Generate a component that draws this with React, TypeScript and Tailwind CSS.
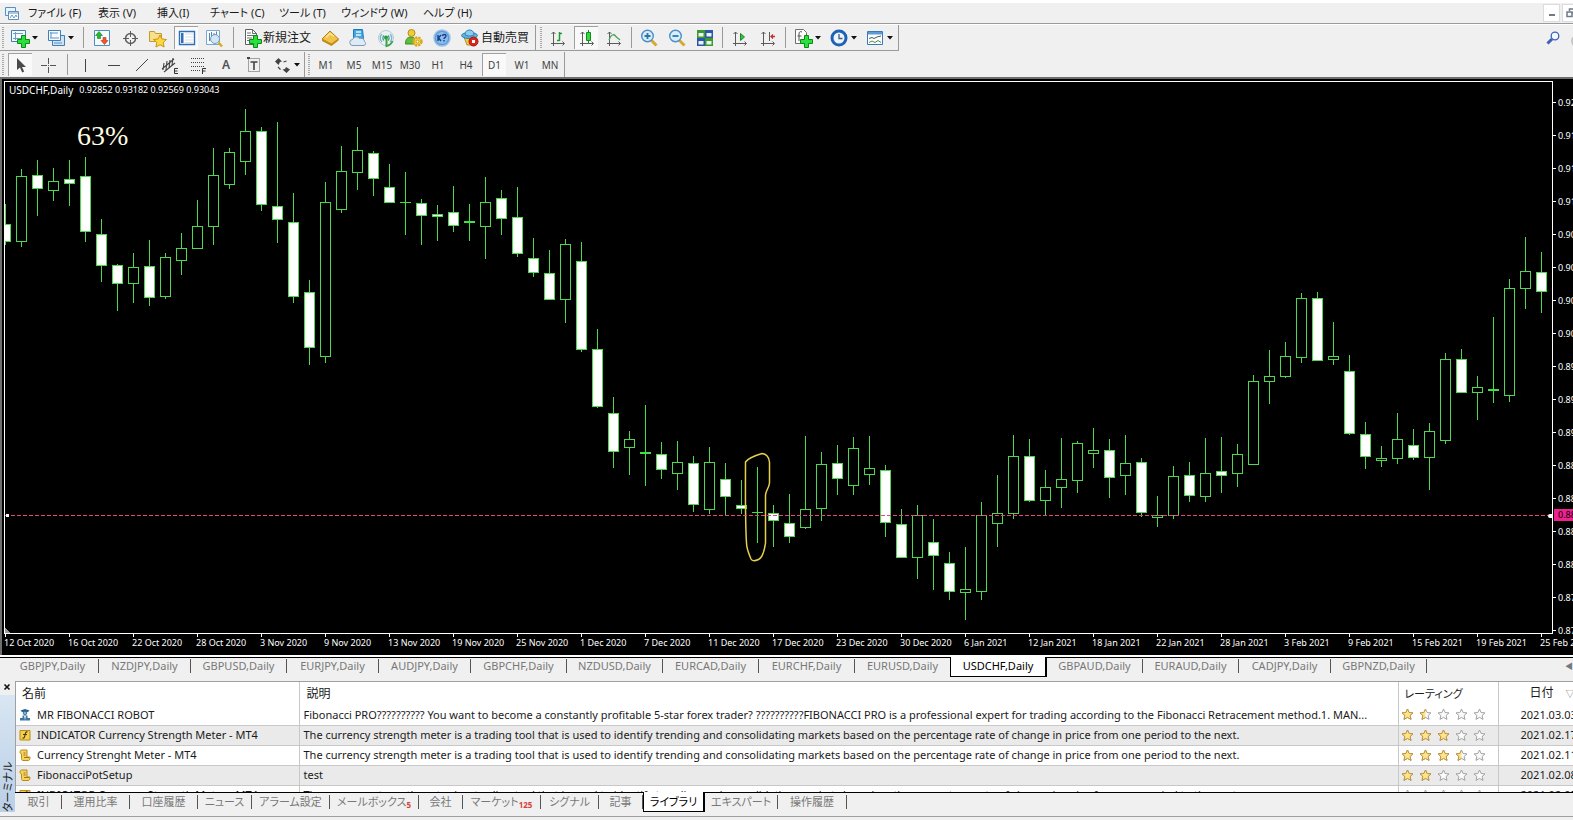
import React from 'react';

// [high, body top, body bottom, low, filled]
const CANDLES: [number, number, number, number, number][] = [
  [204, 224, 241, 245, 1], [169, 176, 241, 247, 0], [160, 175, 188, 216, 1], [168, 181, 190, 201, 0],
  [160, 179, 183, 206, 1], [157, 176, 231, 242, 1], [219, 234, 265, 282, 1], [264, 265, 283, 311, 1],
  [253, 267, 283, 303, 0], [240, 266, 297, 306, 1], [253, 257, 296, 299, 0], [233, 248, 260, 275, 0],
  [200, 226, 248, 249, 0], [148, 175, 226, 245, 0], [148, 152, 184, 189, 0], [109, 131, 161, 175, 0],
  [127, 131, 204, 211, 1], [122, 206, 219, 243, 1], [193, 222, 296, 303, 1], [280, 292, 347, 365, 1],
  [182, 202, 356, 363, 0], [146, 171, 209, 213, 0], [127, 150, 172, 190, 0], [151, 153, 178, 196, 1],
  [164, 187, 202, 202, 1], [172, 202, 202, 235, 0], [199, 203, 215, 245, 1], [205, 214, 216, 241, 1],
  [186, 212, 225, 232, 1], [204, 221, 222, 241, 0], [177, 202, 226, 259, 0], [190, 198, 218, 235, 1],
  [187, 217, 253, 257, 1], [238, 258, 272, 277, 1], [250, 273, 299, 299, 1], [239, 244, 299, 323, 0],
  [242, 261, 349, 352, 1], [329, 349, 406, 408, 1], [397, 413, 451, 468, 1], [431, 439, 447, 475, 0],
  [405, 452, 453, 486, 0], [442, 454, 469, 479, 1], [441, 462, 473, 490, 0], [456, 463, 504, 512, 1],
  [447, 462, 509, 514, 0], [463, 479, 496, 515, 1], [480, 505, 508, 514, 1], [467, 512, 512, 543, 0],
  [505, 513, 520, 547, 1], [494, 523, 536, 543, 1], [436, 509, 527, 529, 0], [452, 464, 508, 521, 0],
  [445, 463, 478, 495, 1], [437, 448, 485, 495, 0], [436, 468, 474, 485, 0], [465, 470, 522, 537, 1],
  [509, 524, 557, 558, 1], [505, 515, 557, 579, 0], [519, 542, 555, 590, 1], [552, 563, 591, 600, 1],
  [547, 589, 592, 620, 0], [502, 515, 591, 600, 0], [475, 513, 523, 547, 0], [435, 456, 513, 519, 0],
  [439, 456, 500, 502, 1], [470, 487, 500, 515, 0], [438, 479, 487, 508, 0], [441, 443, 480, 493, 0],
  [428, 450, 453, 468, 0], [439, 450, 477, 498, 1], [435, 463, 475, 495, 0], [458, 462, 512, 517, 1],
  [496, 515, 517, 527, 0], [466, 476, 515, 519, 0], [462, 475, 495, 502, 1], [438, 473, 496, 502, 0],
  [437, 471, 475, 493, 1], [444, 454, 473, 487, 0], [375, 381, 464, 464, 0], [350, 376, 381, 404, 0],
  [342, 356, 376, 378, 0], [293, 298, 357, 363, 0], [292, 298, 360, 360, 1], [322, 356, 359, 365, 0],
  [355, 371, 433, 435, 1], [422, 434, 456, 469, 1], [446, 458, 460, 467, 0], [413, 439, 458, 464, 0],
  [429, 445, 457, 460, 1], [423, 431, 457, 490, 0], [353, 359, 440, 444, 0], [349, 359, 392, 393, 1],
  [376, 387, 392, 420, 0], [317, 389, 390, 403, 0], [279, 288, 395, 402, 0], [237, 271, 288, 309, 0],
  [252, 272, 291, 313, 1],
];

const DATES = [
  '12 Oct 2020', '16 Oct 2020', '22 Oct 2020', '28 Oct 2020', '3 Nov 2020', '9 Nov 2020', '13 Nov 2020',
  '19 Nov 2020', '25 Nov 2020', '1 Dec 2020', '7 Dec 2020', '11 Dec 2020', '17 Dec 2020', '23 Dec 2020',
  '30 Dec 2020', '6 Jan 2021', '12 Jan 2021', '18 Jan 2021', '22 Jan 2021', '28 Jan 2021', '3 Feb 2021',
  '9 Feb 2021', '15 Feb 2021', '19 Feb 2021', '25 Feb 2021',
];

const PRICES = Array.from({ length: 17 }, (_, i) => (0.9207 - i * 0.0028).toFixed(5));

const MENUS = [
  { label: 'ファイル (F)', width: 'w-[70px]' },
  { label: '表示 (V)', width: 'w-[59px]' },
  { label: '挿入(I)', width: 'w-[53px]' },
  { label: 'チャート (C)', width: 'w-[69px]' },
  { label: 'ツール (T)', width: 'w-[62px]' },
  { label: 'ウィンドウ (W)', width: 'w-[82px]' },
  { label: 'ヘルプ (H)', width: 'w-[60px]' },
];

const TIMEFRAMES = ['M1', 'M5', 'M15', 'M30', 'H1', 'H4', 'D1', 'W1', 'MN'];

const CHART_TABS = [
  { label: 'GBPJPY,Daily', width: 'w-[92px]' },
  { label: 'NZDJPY,Daily', width: 'w-[92px]' },
  { label: 'GBPUSD,Daily', width: 'w-[96px]' },
  { label: 'EURJPY,Daily', width: 'w-[92px]' },
  { label: 'AUDJPY,Daily', width: 'w-[92px]' },
  { label: 'GBPCHF,Daily', width: 'w-[96px]' },
  { label: 'NZDUSD,Daily', width: 'w-[96px]' },
  { label: 'EURCAD,Daily', width: 'w-[96px]' },
  { label: 'EURCHF,Daily', width: 'w-[96px]' },
  { label: 'EURUSD,Daily', width: 'w-[96px]' },
  { label: 'USDCHF,Daily', width: 'w-[97px]', active: true },
  { label: 'GBPAUD,Daily', width: 'w-[96px]' },
  { label: 'EURAUD,Daily', width: 'w-[96px]' },
  { label: 'CADJPY,Daily', width: 'w-[92px]' },
  { label: 'GBPNZD,Daily', width: 'w-[96px]' },
];

const TERMINAL_TABS = [
  { label: '取引', width: 'w-[46px]' },
  { label: '運用比率', width: 'w-[68px]' },
  { label: '口座履歴', width: 'w-[68px]' },
  { label: 'ニュース', width: 'w-[54px]' },
  { label: 'アラーム設定', width: 'w-[78px]' },
  { label: 'メールボックス', width: 'w-[89px]', count: 5 },
  { label: '会社', width: 'w-[44px]' },
  { label: 'マーケット', width: 'w-[78px]', count: 125 },
  { label: 'シグナル', width: 'w-[58px]' },
  { label: '記事', width: 'w-[44px]' },
  { label: 'ライブラリ', width: 'w-[62px]', active: true },
  { label: 'エキスパート', width: 'w-[73px]' },
  { label: '操作履歴', width: 'w-[69px]' },
];

const METER =
  'The currency strength meter is a trading tool that is used to identify trending and consolidating markets based on the percentage rate of change in price from one period to the next.';

const ROWS = [
  {
    icon: 'robot',
    name: 'MR FIBONACCI ROBOT',
    text: 'Fibonacci PRO?????????? You want to become a constantly profitable 5-star forex trader? ??????????FIBONACCI PRO is a professional expert for trading according to the Fibonacci Retracement method.1. MAN...',
    stars: 1.5,
    date: '2021.03.03',
  },
  { icon: 'indicator', name: 'INDICATOR Currency Strength Meter - MT4', text: METER, stars: 3, date: '2021.02.17' },
  { icon: 'script', name: 'Currency Strenght Meter - MT4', text: METER, stars: 3.5, date: '2021.02.11' },
  { icon: 'script', name: 'FibonacciPotSetup', text: 'test', stars: 2, date: '2021.02.08' },
  { icon: 'indicator', name: 'INDICATOR Currency Strength Meter - MT4', text: METER, stars: 0, date: '2021.02.05' },
];

function Svg({ children, size = 20 }: { children: React.ReactNode; size?: number }) {
  return (
    <svg width={size} height={size} viewBox={`0 0 ${size} ${size}`} fill="none" className="shrink-0" aria-hidden="true">
      {children}
    </svg>
  );
}

const Plus = () => (
  <path d="M11.500 7.500h4v4h4v4h-4v4h-4v-4h-4v-4h4z" fill="#2be03a" stroke="#0a8a1a" />
);

const Axes = () => (
  <path d="M5.500 4v14M3 15.500h13M3.500 6l2-2 2 2M14.500 13.500l2 2-2 2" stroke="#5a5a5a" />
);

const ICONS: Record<string, React.ReactNode> = {
  newChart: (
    <>
      <path d="M1.500 2.500h14v11h-14z" fill="#f4faff" stroke="#3f7fb5" />
      <path d="M3 5.500h10M5.500 4v8M3 10.500h8" stroke="#6a9cc4" />
      <Plus />
    </>
  ),
  profiles: (
    <>
      <path d="M6.500 7.500h12v10h-12z" fill="#cfe3f5" stroke="#3f7fb5" />
      <path d="M2.500 2.500h12v10h-12z" fill="#f4faff" stroke="#3f7fb5" />
      <path d="M4 5h8M5 4v6M4 10h9M8 15h8" stroke="#5e93c0" />
    </>
  ),
  market: (
    <>
      <path d="M2.500 2.500h15v15h-15z" fill="#f5fbff" stroke="#4b90c2" />
      <path d="M7 3.500l3.500 4h-2v3h-3v-3h-2z" fill="#27b62c" stroke="#11801a" strokeWidth=".6" />
      <path d="M12.500 16.500l-3.500-4h2v-3h3v3h2z" fill="#f0562c" stroke="#b93415" strokeWidth=".6" />
    </>
  ),
  crosshair: (
    <>
      <circle cx="10.500" cy="10.500" r="5" stroke="#5c5c5c" strokeWidth="1.500" />
      <path d="M10.500 3v6M10.500 12v6M3 10.500h6M12 10.500h6" stroke="#5c5c5c" />
    </>
  ),
  navigator: (
    <>
      <path d="M1.500 3.500h5l1 2h6v8h-12z" fill="#f8e08a" stroke="#c69a2c" />
      <path d="M12 7l2 4 4.500.5-3.300 3 .9 4.500-4.100-2.200-4.100 2.200.9-4.500-3.300-3 4.500-.5z" fill="#ffd83d" stroke="#bf8b12" strokeWidth=".9" />
    </>
  ),
  terminal: (
    <>
      <path d="M2.500 3.500h15v13h-15z" fill="#fff" stroke="#2f6fb5" strokeWidth="1.400" />
      <path d="M4 5h2.500v10h-2.500z" fill="#2f6fb5" />
      <path d="M8 6h8M8 9h8M8 12h8M8 14.500h8" stroke="#d5dfe8" />
    </>
  ),
  tester: (
    <>
      <path d="M2.500 2.500h13v14h-13z" fill="#f7fbff" stroke="#7aa7cc" />
      <path d="M5.500 5v8M7.500 4v5M10 5v3M12.500 3.500v4" stroke="#5d83a8" />
      <circle cx="11" cy="11" r="4.500" fill="#c5e2f7" fillOpacity=".8" stroke="#7a9cb8" />
      <path d="M14.500 14.500l3.500 4" stroke="#d9a824" strokeWidth="2.400" />
    </>
  ),
  order: (
    <>
      <path d="M3.500 1.500h7l4 4v11h-11z" fill="#fff" stroke="#606060" />
      <path d="M10.500 1.500v4h4M5 5h4M5 7.500h7M5 10h5M5 12.500h4" stroke="#707070" />
      <Plus />
    </>
  ),
  gold: (
    <>
      <path d="M2 11l8-8 8.500 8-7 5.500z" fill="#f0c445" stroke="#b47e1c" />
      <path d="M2 11l9.500 4.500v2.500l-9.500-5zM11.500 15.500l7-5v2l-7 5.500z" fill="#c48a22" />
      <path d="M6 9.500l4-4 4 3" stroke="#fbe79d" strokeWidth="1.500" />
    </>
  ),
  vps: (
    <>
      <path d="M5.500 1.500h9l1 9h-10z" fill="#3fa9e8" stroke="#1f78bd" />
      <path d="M8 4h5M8 7h5" stroke="#e6f5ff" strokeWidth="1.500" />
      <path d="M5 17.500a3 3 0 01-.5-6 4 4 0 017-1 3.500 3.500 0 015 3 2.200 2.200 0 01-.5 4z" fill="#dfeaf5" stroke="#7d9cba" />
    </>
  ),
  signal: (
    <>
      <circle cx="10" cy="10" r="7.500" fill="#e9f3f2" stroke="#b3cddc" />
      <path d="M6 6a5.500 5.500 0 000 8M14 6a5.500 5.500 0 010 8" stroke="#7db0d4" strokeWidth="1.300" />
      <path d="M8 7.500a3.400 3.400 0 000 5M12 7.500a3.400 3.400 0 010 5" stroke="#4aa07a" strokeWidth="1.300" />
      <circle cx="10" cy="9.500" r="2" fill="#279a3f" />
      <path d="M10.500 10v8a8 8 0 006-5" stroke="#3ea34c" strokeWidth="2" />
    </>
  ),
  expert: (
    <>
      <path d="M1.500 16c0-5 2-7 5.500-7s5 2 5.500 7z" fill="#62bd3b" stroke="#3a8a20" />
      <circle cx="7.500" cy="5" r="3.500" fill="#f1cb3a" stroke="#b68c16" />
      <circle cx="13.500" cy="13.500" r="4" fill="#f8d752" stroke="#dba61e" strokeWidth="2.400" strokeDasharray="2.200 1" />
      <circle cx="13.500" cy="13.500" r="1.500" fill="#fff" stroke="#c0901b" />
    </>
  ),
  help: (
    <>
      <circle cx="10" cy="10" r="8" fill="#5a9bdd" stroke="#9cc0e4" strokeWidth="1.500" />
      <circle cx="10" cy="10" r="6" fill="#8cbcec" />
      <path d="M6 7v6M6 10.500l3-3.500M6.500 10l2.500 3M10.500 8c0-2 3.500-2 3.500 0 0 1.500-2 1.300-2 3M12 12v1.500" stroke="#173f87" strokeWidth="1.400" />
    </>
  ),
  auto: (
    <>
      <path d="M4 9h12l-2 8h-7z" fill="#edc94a" stroke="#b9902a" />
      <ellipse cx="9.500" cy="7.500" rx="8" ry="3" fill="#5fb1e0" stroke="#2d7fb5" />
      <path d="M5 6.500c0-6 9-6 9 0-2 2-7 2-9 0z" fill="#8acdf0" stroke="#2d7fb5" />
      <circle cx="13.500" cy="13.500" r="4.500" fill="#d8281c" stroke="#a5170f" />
      <path d="M12 12h3v3h-3z" fill="#fff" />
    </>
  ),
  bars: (
    <>
      <Axes />
      <path d="M11.500 4v9M9 12.500h2.500M11.500 5.500h2.500" stroke="#1f9a34" strokeWidth="1.500" />
    </>
  ),
  candles: (
    <>
      <Axes />
      <path d="M11.500 2v13" stroke="#138a22" />
      <path d="M9.500 4.500h4v8h-4z" fill="#2fdc3b" stroke="#138a22" />
    </>
  ),
  line: (
    <>
      <Axes />
      <path d="M5 12c2-6 5-6 6.500-4s3 2.500 4.500 4" stroke="#4aa557" strokeWidth="1.300" />
    </>
  ),
  zoomIn: (
    <>
      <path d="M12.500 12.500l5 5" stroke="#d6aa2e" strokeWidth="3" />
      <circle cx="8.500" cy="8" r="5.800" fill="#d8eefb" stroke="#4a8fc7" strokeWidth="1.400" />
      <path d="M5.500 8h6M8.500 5v6" stroke="#2f75ad" strokeWidth="1.800" />
    </>
  ),
  zoomOut: (
    <>
      <path d="M12.500 12.500l5 5" stroke="#d6aa2e" strokeWidth="3" />
      <circle cx="8.500" cy="8" r="5.800" fill="#d8eefb" stroke="#4a8fc7" strokeWidth="1.400" />
      <path d="M5.500 8h6" stroke="#2f75ad" strokeWidth="1.800" />
    </>
  ),
  tile: (
    <>
      <path d="M2 2h8v8h-8zM10 10h8v8h-8z" fill="#3c9a2e" />
      <path d="M10 2h8v8h-8zM2 10h8v8h-8z" fill="#2d55a8" />
      <path d="M3.500 5h5v3.500h-5zM11.500 5h5v3.500h-5zM3.500 13h5v3.500h-5zM11.500 13h5v3.500h-5z" fill="#e9f3f0" />
    </>
  ),
  scroll: (
    <>
      <Axes />
      <path d="M10.500 5.500l4 3.500-4 3.500z" fill="#36c244" stroke="#188a2a" />
    </>
  ),
  shift: (
    <>
      <Axes />
      <path d="M11.500 4v9" stroke="#5a5a5a" />
      <path d="M17 8.500h-4M15 6.500l-2 2 2 2" stroke="#b5392a" strokeWidth="1.300" />
    </>
  ),
  indicators: (
    <>
      <path d="M2.500 1.500h8l3 3v11h-11z" fill="#fff" stroke="#707070" />
      <path d="M9 4c-2-1-3 0-3 2v7M4.500 8h4" stroke="#505050" />
      <Plus />
    </>
  ),
  clock: (
    <>
      <circle cx="10" cy="10" r="7" fill="#eaf5ff" stroke="#1e62b5" strokeWidth="3" />
      <path d="M10 6v4.500h3.500" stroke="#4a5a70" strokeWidth="1.300" />
    </>
  ),
  template: (
    <>
      <path d="M2.500 3.500h15v13h-15z" fill="#fff" stroke="#3d78b4" />
      <path d="M3 4h14v2.500h-14z" fill="#5b9bd8" />
      <path d="M4 10.500l3-1 2 1 3-1.500 4-1" stroke="#555" />
      <path d="M4 14.500l3-1.500 3 1.500 3-2 3 2" stroke="#3f8f4a" />
    </>
  ),
  cursor: <path d="M6 3v12l3-2.500 2.200 5 2-1-2.200-4.500h4z" fill="#4a4a4a" />,
  cross: <path d="M10.500 3v6M10.500 12v6M3 10.500h6M12 10.500h6M10 10.500h1" stroke="#555" />,
  vline: <path d="M9.500 4v13" stroke="#444" />,
  hline: <path d="M4 10.500h12" stroke="#444" />,
  trend: <path d="M4 16l12-12" stroke="#444" />,
  channel: (
    <>
      <path d="M2 14l12-10M4 17l11-9M4 8l-1 7M7 6l-1 9M10 5l-1 8M13 3l-1 7" stroke="#444" strokeWidth="1.100" />
      <path d="M18 13.500h-3.500v5h3.500M14.500 16h3" stroke="#333" />
    </>
  ),
  fibo: (
    <>
      <path d="M3 3.500h13M3 7.500h13M3 11.500h13M3 15.500h9" stroke="#444" strokeDasharray="1 1" />
      <path d="M18 13.500h-3.500v5.500M14.500 16h3" stroke="#333" />
    </>
  ),
  label: (
    <>
      <path d="M4.500 3.500h11v13h-11z" stroke="#555" strokeDasharray="1 1" />
      <path d="M3 2h3v2h-3z" fill="#444" />
      <path d="M6.500 7h7M10 7v8" stroke="#444" strokeWidth="1.600" />
    </>
  ),
  arrows: (
    <>
      <path d="M6.500 3l3.500 3.500-2 .5-1.500 3-3.500-3.500z" fill="#444" />
      <path d="M14.500 18l-4-3.500 2.500-.5 1-2 4 2.500z" fill="#444" />
      <path d="M6 12l2.500 2.500M11.500 7l3-1" stroke="#444" strokeWidth="1.200" />
    </>
  ),
};

function Caret() {
  return (
    <svg width="6" height="4" viewBox="0 0 6 4" className="shrink-0" aria-hidden="true">
      <path d="M0 0h6L3 3.500z" fill="#111" />
    </svg>
  );
}

function Tool({ icon, title, active }: { icon: string; title: string; active?: boolean }) {
  return (
    <button
      aria-label={title}
      className={
        active
          ? 'mx-0.5 flex h-[23px] w-6 shrink-0 items-center justify-center border-t border-l border-[#a0a0a0] bg-[#f9f9f9]'
          : 'flex h-full w-7 shrink-0 items-center justify-center'
      }
    >
      <Svg>{ICONS[icon]}</Svg>
    </button>
  );
}

function DropTool({ icon, title }: { icon: string; title: string }) {
  return (
    <button aria-label={title} className="flex h-full w-9 shrink-0 items-center gap-0.5 pl-1">
      <Svg>{ICONS[icon]}</Svg>
      <Caret />
    </button>
  );
}

function TextTool({ icon, label }: { icon: string; label: string }) {
  return (
    <button className="flex h-full w-[78px] shrink-0 items-center gap-px pl-1 whitespace-nowrap">
      <Svg>{ICONS[icon]}</Svg>
      {label}
    </button>
  );
}

function Grip() {
  return <div className="mx-0.5 my-0.5 w-0.5 shrink-0 self-stretch bg-[repeating-linear-gradient(#a8a8a8_0_1px,#f0f0f0_1px_2px)]" />;
}

function Sep({ wide }: { wide?: boolean }) {
  return (
    <div className={wide ? 'flex w-2.5 shrink-0 justify-center self-stretch py-0.5' : 'flex w-[7px] shrink-0 justify-center self-stretch py-0.5'}>
      <div className="w-px bg-[#9a9a9a]" />
    </div>
  );
}

const STAR = 'M6.500 1l1.600 3.500 3.900.4-2.900 2.600.9 3.900-3.500-2-3.500 2 .9-3.900-2.900-2.600 3.900-.4z';

function Star({ fill }: { fill: number }) {
  return (
    <Svg size={13}>
      <path d={STAR} fill="#fbfbfb" stroke="#a2a2a2" />
      {fill > 0 && (
        <g className={fill < 1 ? '[clip-path:inset(0_50%_0_0)]' : ''}>
          <path d={STAR} fill="#ffe48a" stroke="#bd9540" />
        </g>
      )}
    </Svg>
  );
}

function Stars({ value }: { value: number }) {
  return (
    <div className="flex gap-[5px]" role="img" aria-label={`${value} / 5`}>
      {[0, 1, 2, 3, 4].map((i) => (
        <Star key={i} fill={Math.max(0, Math.min(1, value - i))} />
      ))}
    </div>
  );
}

function RowIcon({ kind }: { kind: string }) {
  if (kind === 'robot') {
    return (
      <Svg size={12}>
        <path d="M1.500 1.500l4.500-1.500 4.500 1.500-1.500 1.500h-6z" fill="#2d5f8c" />
        <circle cx="6" cy="4" r="1.800" fill="#7fb0d8" stroke="#2d5f8c" strokeWidth=".8" />
        <path d="M3.500 6.500h5v2.500h2.500v2.500h-10v-2.500h2.500z" fill="#3f74a3" />
        <path d="M5 7l1 4 1-4z" fill="#e6f1fa" />
      </Svg>
    );
  }
  if (kind === 'indicator') {
    return (
      <Svg size={12}>
        <path d="M1 1.500h10v9.500h-10z" fill="#f3cf4a" stroke="#b8891e" />
        <path d="M8.500 3c-2-.5-2 1-2.500 3s-.5 3.500-2.500 3M4 5.500h4" stroke="#4a3a10" strokeWidth="1.100" />
      </Svg>
    );
  }
  return (
    <Svg size={12}>
      <path d="M2.500 5c-2 0-2-4 0-4h5.500v7h3c0 3-1 3.500-2 3.500h-5c-1 0-1.500-.5-1.500-2z" fill="#f6d45c" stroke="#b8891e" />
      <path d="M4.500 4h2M4.500 6h2M5 8.500h5" stroke="#a37514" />
    </Svg>
  );
}

function Candle({ index, data }: { index: number; data: [number, number, number, number, number] }) {
  const x = 5 + index * 16;
  const [high, top, bottom, low, filled] = data;
  if (bottom - top < 2) {
    return (
      <g fill="#3fe23f">
        <rect x={x} y={high} width="1" height={low - high} />
        <rect x={x - 5} y={top} width="11" height={bottom - top + 1} />
      </g>
    );
  }
  return (
    <g>
      <path d={`M${x + 0.5} ${high}V${top}M${x + 0.5} ${bottom}V${low}`} stroke="#4fd84f" />
      <rect x={x - 4.5} y={top + 0.5} width="10" height={bottom - top} fill={filled ? '#fff' : '#000'} stroke="#4fd84f" />
    </g>
  );
}

function Chart() {
  return (
    <section className="flex min-h-0 flex-1 flex-col border-t-2 border-l-2 border-[#6e6e6e] bg-black text-[9px] leading-3 text-white">
      <div className="flex min-h-0 flex-1 pt-0.5 pl-0.5">
        <div className="relative min-w-0 flex-1 overflow-hidden border border-white">
          <svg width="100%" height="100%" className="block" shapeRendering="crispEdges">
            <g transform="translate(-5 -82)">
              {CANDLES.map((c, i) => (
                <Candle key={i} index={i} data={c} />
              ))}
              <path d="M5 628v5h5z" fill="#9a9a9a" />
              <path
                d="M745.500 462C748 458 757 455 762 453.500C767 454 769 458 769.500 462V483C769 488 766 490 765.500 495V543C764.500 550 762 558 758.500 559.500C755 561 752 561 751 559C748 552 746.500 548 746.500 543C745 520 745.500 485 745.500 462Z"
                fill="none"
                stroke="#e6cf4a"
                strokeWidth="1.500"
                shapeRendering="auto"
              />
            </g>
            <line x1="0" x2="100%" y1="433.5" y2="433.5" stroke="#e8457a" strokeDasharray="4 2" />
            <rect x="1" y="432" width="3" height="3" fill="#fff" />
          </svg>
          <div className="absolute top-0.5 left-1 flex gap-1.5 whitespace-pre">
            <span className="text-[10px]">USDCHF,Daily</span>
            <span>0.92852 0.93182 0.92569 0.93043</span>
          </div>
          <div className="absolute top-9 left-[72px] font-['Liberation_Serif',serif] text-[28px] leading-9 text-[#fffbe0]">63%</div>
          <div className="absolute top-[432px] right-0 h-1 w-1 rounded-l-full bg-white" />
        </div>
        <div className="relative w-5 shrink-0">
          <ul className="h-0 pt-[5px]">
            {PRICES.map((p) => (
              <li key={p} className="flex h-[33px] items-center gap-0.5">
                <span className="h-px w-[3px] shrink-0 bg-white" />
                {p}
              </li>
            ))}
          </ul>
          <div className="absolute top-[428px] left-px h-3 bg-[#f0218f] pl-1 text-black">0.88580</div>
        </div>
      </div>
      <ul className="flex h-[21px] shrink-0 pl-0.5">
        {DATES.map((d) => (
          <li key={d} className="w-16 shrink-0 whitespace-nowrap">
            <div className="ml-px h-[3px] w-px bg-white" />
            {d}
          </li>
        ))}
      </ul>
    </section>
  );
}

export default function App() {
  return (
    <div className="flex h-screen flex-col overflow-hidden bg-[#f0f0f0] pt-[3px] font-['Noto_Sans','Noto_Sans_CJK_JP',sans-serif] text-[12px] leading-4 text-[#1a1a1a] shadow-[inset_0_3px_0_#fff]">
      {/* Menu bar */}
      <nav className="flex h-[21px] shrink-0 items-center border-b border-[#9a9a9a] pl-[5px]">
        <Svg size={14}>
          <path d="M.500 1.500h10v8h-10z" fill="#e8f4ff" stroke="#5b8fbd" />
          <path d="M3.500 5.500h10v8h-10z" fill="#fff" stroke="#5b8fbd" />
          <path d="M4 7h9" stroke="#5b8fbd" />
          <path d="M5 12l2-3 2 3 2-3 1 2" stroke="#4c7ea8" strokeWidth=".8" />
        </Svg>
        <div className="flex flex-1 pl-[9px] text-[11px] [font-feature-settings:'palt']">
          {MENUS.map((m) => (
            <button key={m.label} className={`${m.width} shrink-0 text-left whitespace-nowrap`}>
              {m.label}
            </button>
          ))}
        </div>
        <div className="-mr-1.5 flex shrink-0 gap-0.5">
          <button aria-label="最小化" className="flex h-[18px] w-[17px] items-end justify-center border border-[#dcdcdc] bg-white pb-[5px]">
            <span className="h-0.5 w-1.5 bg-[#707a84]" />
          </button>
          <button aria-label="元に戻す" className="flex h-[18px] w-[17px] items-center justify-center border border-[#dcdcdc] bg-white">
            <Svg size={10}>
              <path d="M3.500 3v-2h5v4h-2M1 4h5v4.500h-5z" stroke="#707a84" strokeWidth="1.500" />
            </Svg>
          </button>
        </div>
      </nav>

      {/* Standard toolbar */}
      <div className="flex h-[27px] shrink-0 border-t border-white">
        <div className="flex shrink-0 items-center border-r border-b border-[#9a9a9a] pr-px">
          <Grip />
          <DropTool icon="newChart" title="新規チャート" />
          <DropTool icon="profiles" title="プロファイル" />
          <Sep wide />
          <Tool icon="market" title="気配値" />
          <Tool icon="crosshair" title="データウィンドウ" />
          <Tool icon="navigator" title="ナビゲーター" />
          <Tool icon="terminal" title="ターミナル" active />
          <Tool icon="tester" title="ストラテジーテスター" />
          <Sep wide />
          <TextTool icon="order" label="新規注文" />
          <Tool icon="gold" title="MetaEditor" />
          <Tool icon="vps" title="VPS" />
          <Tool icon="signal" title="シグナル" />
          <Tool icon="expert" title="エキスパート" />
          <Tool icon="help" title="ヘルプ" />
          <TextTool icon="auto" label="自動売買" />
        </div>
        <div className="flex shrink-0 items-center border-r border-b border-[#9a9a9a] pr-px pl-0.5">
          <Grip />
          <Tool icon="bars" title="バーチャート" />
          <Tool icon="candles" title="ローソク足" active />
          <Tool icon="line" title="ラインチャート" />
          <Sep />
          <Tool icon="zoomIn" title="拡大" />
          <Tool icon="zoomOut" title="縮小" />
          <Tool icon="tile" title="整列" />
          <Sep />
          <Tool icon="scroll" title="自動スクロール" />
          <Tool icon="shift" title="チャートシフト" />
          <Sep />
          <DropTool icon="indicators" title="インディケータ" />
          <DropTool icon="clock" title="時間足" />
          <DropTool icon="template" title="テンプレート" />
        </div>
        <div className="flex flex-1 justify-end pt-1.5">
          <button aria-label="検索" className="flex h-4 w-7 shrink-0 justify-center">
            <Svg size={14}>
              <path d="M1.500 12.500l4.500-4.500" stroke="#3a62b8" strokeWidth="3" />
              <circle cx="9" cy="5" r="3.800" fill="#f4f8ff" stroke="#3a62b8" strokeWidth="1.300" />
            </Svg>
          </button>
          <span className="mt-1 -mr-2.5 ml-1 h-3 w-3 shrink-0 rounded-full border-2 border-[#c4c4c4]" />
        </div>
      </div>

      {/* Drawing toolbar */}
      <div className="flex h-[26px] shrink-0 pt-px">
        <div className="flex shrink-0 items-center border-r border-[#9a9a9a]">
          <Grip />
          <Tool icon="cursor" title="カーソル" active />
          <Tool icon="cross" title="クロスヘア" />
          <Sep wide />
          <Tool icon="vline" title="垂直線" />
          <Tool icon="hline" title="水平線" />
          <Tool icon="trend" title="トレンドライン" />
          <Tool icon="channel" title="チャネル" />
          <Tool icon="fibo" title="フィボナッチ" />
          <button className="flex h-full w-7 shrink-0 items-center justify-center font-semibold text-[#505050]">A</button>
          <Tool icon="label" title="テキストラベル" />
          <DropTool icon="arrows" title="矢印" />
        </div>
        <div className="flex shrink-0 items-center border-r border-[#9a9a9a] pl-px text-[10px] text-[#444]">
          <Grip />
          {TIMEFRAMES.map((t) => (
            <button
              key={t}
              className={
                t === 'D1'
                  ? 'mx-0.5 h-[23px] w-6 shrink-0 border-t border-l border-[#a0a0a0] bg-[#f9f9f9]'
                  : 'h-full w-7 shrink-0'
              }
            >
              {t}
            </button>
          ))}
        </div>
      </div>

      <Chart />

      {/* Chart tabs */}
      <div className="flex h-[26px] shrink-0 flex-col border-t-2 border-white">
        <div className="flex h-5 items-start border-t border-black pl-[7px] text-[11px] text-[#787878]">
          {CHART_TABS.map((t) => (
            <button
              key={t.label}
              className={
                t.active
                  ? `${t.width} -mt-px -ml-px flex h-5 shrink-0 items-center justify-center border-r-2 border-b border-l border-black bg-white pb-px text-black`
                  : `${t.width} flex h-4 shrink-0 items-center justify-center`
              }
            >
              {t.active ? t.label : (
                <>
                  <span className="flex-1 text-center">{t.label}</span>
                  <span className="h-3.5 w-px bg-[#555]" />
                </>
              )}
            </button>
          ))}
          <span className="ml-auto text-[8px]">◀</span>
        </div>
      </div>

      {/* Terminal */}
      <div className="flex h-[136px] shrink-0 border-b border-[#a0a0a0]">
        <aside className="flex w-[15px] shrink-0 flex-col">
          <button aria-label="閉じる" className="flex h-3 items-center justify-center pr-0.5">
            <Svg size={8}>
              <path d="M1.500 1.500l5 5M6.500 1.500l-5 5" stroke="#111" strokeWidth="1.600" />
            </Svg>
          </button>
          <div className="mt-0.5 mb-1 flex flex-1 rotate-180 items-center bg-linear-to-t from-[#d9e6f3] to-[#b9cfe6] text-[11px] [font-feature-settings:'palt'] [text-orientation:sideways] [writing-mode:vertical-rl]">
            ターミナル
          </div>
        </aside>
        <div className="flex min-w-0 flex-1 flex-col">
          <div className="h-[111px] shrink-0 overflow-hidden border-t border-l border-[#a0a0a0] bg-white">
            <table className="w-[calc(100%+8px)] table-fixed border-collapse">
              <colgroup>
                <col className="w-[283px]" />
                <col />
                <col className="w-[100px]" />
                <col className="w-[83px]" />
              </colgroup>
              <thead>
                <tr className="h-[23px] text-left [font-feature-settings:'palt']">
                  <th className="border-r border-[#c8c8c8] pl-1.5 font-normal">名前</th>
                  <th className="border-r border-[#c8c8c8] pl-[7px] font-normal">説明</th>
                  <th className="border-r border-[#c8c8c8] pl-1.5 text-[11px] font-normal">レーティング</th>
                  <th className="pl-[31px] font-normal whitespace-nowrap">
                    日付<span className="pl-3 text-[9px] text-[#777]">▽</span>
                  </th>
                </tr>
              </thead>
              <tbody className="text-[11px]">
                {ROWS.map((r, i) => (
                  <tr key={i} className={i % 2 ? 'h-5 border-b border-[#c8c8c8] bg-[#eaeaea]' : 'h-5 border-b border-[#c8c8c8]'}>
                    <td className="border-r border-[#c8c8c8] pl-[3px]">
                      <div className="flex items-center gap-1.5 whitespace-nowrap">
                        <RowIcon kind={r.icon} />
                        {r.name}
                      </div>
                    </td>
                    <td className="truncate border-r border-[#c8c8c8] pl-1">{r.text}</td>
                    <td className="border-r border-[#c8c8c8] pl-0.5">
                      <Stars value={r.stars} />
                    </td>
                    <td className="pl-[22px]">{r.date}</td>
                  </tr>
                ))}
              </tbody>
            </table>
          </div>
          <div className="flex h-5 shrink-0 items-start border-t border-black pl-px text-[11px] text-[#787878] [font-feature-settings:'palt']">
            {TERMINAL_TABS.map((t) => (
              <button
                key={t.label}
                className={
                  t.active
                    ? `${t.width} -mt-px flex h-5 shrink-0 items-center justify-center border-r-2 border-b border-l border-black bg-white whitespace-nowrap text-black`
                    : `${t.width} flex h-[18px] shrink-0 items-center whitespace-nowrap`
                }
              >
                {t.active ? t.label : (
                  <>
                    <span className="flex flex-1 items-end justify-center">
                      {t.label}
                      {t.count && <span className="text-[8px] leading-[10px] font-bold text-[#d8403c]">{t.count}</span>}
                    </span>
                    <span className="h-3.5 w-px shrink-0 bg-[#555]" />
                  </>
                )}
              </button>
            ))}
          </div>
        </div>
      </div>
      <div className="h-[3px] shrink-0" />
    </div>
  );
}
